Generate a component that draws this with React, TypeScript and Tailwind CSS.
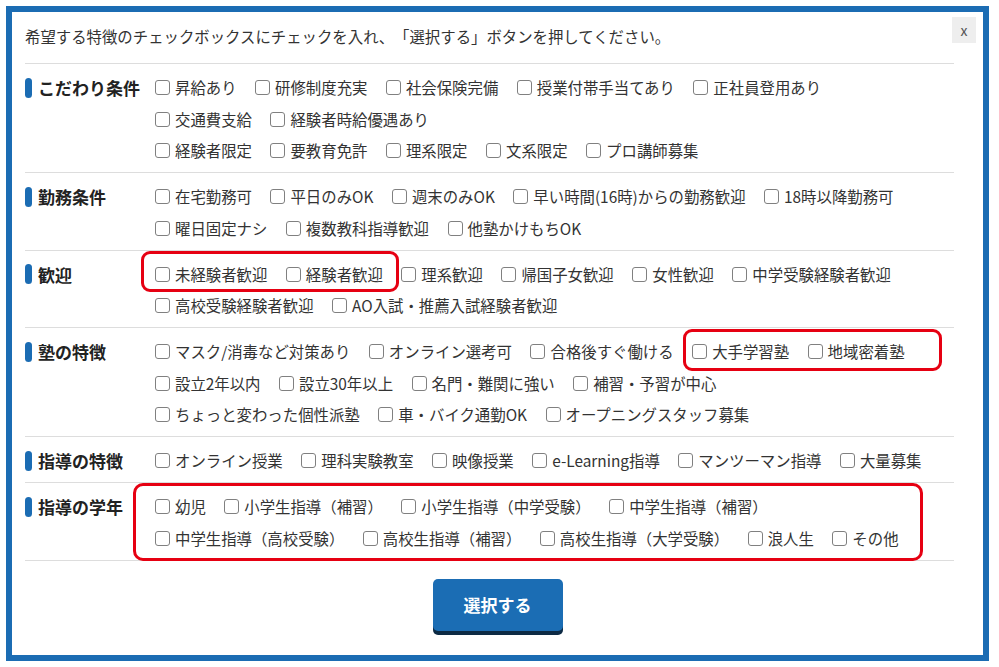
import React from 'react';

type Section = { label: string; rows: string[][] };

const SECTIONS: Section[] = [
  {
    label: 'こだわり条件',
    rows: [
      ['昇給あり', '研修制度充実', '社会保険完備', '授業付帯手当てあり', '正社員登用あり'],
      ['交通費支給', '経験者時給優遇あり'],
      ['経験者限定', '要教育免許', '理系限定', '文系限定', 'プロ講師募集'],
    ],
  },
  {
    label: '勤務条件',
    rows: [
      ['在宅勤務可', '平日のみOK', '週末のみOK', '早い時間(16時)からの勤務歓迎', '18時以降勤務可'],
      ['曜日固定ナシ', '複数教科指導歓迎', '他塾かけもちOK'],
    ],
  },
  {
    label: '歓迎',
    rows: [
      ['未経験者歓迎', '経験者歓迎', '理系歓迎', '帰国子女歓迎', '女性歓迎', '中学受験経験者歓迎'],
      ['高校受験経験者歓迎', 'AO入試・推薦入試経験者歓迎'],
    ],
  },
  {
    label: '塾の特徴',
    rows: [
      ['マスク/消毒など対策あり', 'オンライン選考可', '合格後すぐ働ける', '大手学習塾', '地域密着塾'],
      ['設立2年以内', '設立30年以上', '名門・難関に強い', '補習・予習が中心'],
      ['ちょっと変わった個性派塾', '車・バイク通勤OK', 'オープニングスタッフ募集'],
    ],
  },
  {
    label: '指導の特徴',
    rows: [['オンライン授業', '理科実験教室', '映像授業', 'e-Learning指導', 'マンツーマン指導', '大量募集']],
  },
  {
    label: '指導の学年',
    rows: [
      ['幼児', '小学生指導（補習）', '小学生指導（中学受験）', '中学生指導（補習）'],
      ['中学生指導（高校受験）', '高校生指導（補習）', '高校生指導（大学受験）', '浪人生', 'その他'],
    ],
  },
];

const CheckItem: React.FC<{ text: string }> = ({ text }) => (
  <label className="flex items-center mr-[18.5px] whitespace-nowrap cursor-pointer">
    <span className="w-[15px] h-[15px] border border-[#808080] rounded-[3px] bg-white mr-[5px] shrink-0" />
    <span>{text}</span>
  </label>
);

export default function App() {
  return (
    <div
      className="relative min-h-screen bg-white p-[6px] text-[#333] [text-spacing-trim:space-all]"
      style={{ fontFamily: '"Noto Sans CJK JP", "Noto Sans", sans-serif' }}
    >
      <div className="relative w-[983px] h-[655px] border-[6px] border-[#1b6cb3] bg-white pl-[13px] pr-[29px]">
        {/* close */}
        <button className="absolute top-[5px] right-[7px] w-[24px] h-[26px] bg-[#eeeeee] text-[#555] text-[14px] leading-none flex items-center justify-center">
          x
        </button>

        <div className="pt-[12px] pb-[15px] border-b border-[#dddddd] text-[15.4px] leading-[24px]">
          希望する特徴のチェックボックスにチェックを入れ、「選択する」ボタンを押してください。
        </div>

        {SECTIONS.map((sec) => (
          <div key={sec.label} className="flex pt-[8px] pb-[5.5px] border-b border-[#dddddd]">
            <div className="w-[130px] shrink-0 h-[31.5px] flex items-center">
              <span className="w-[7px] h-[20px] rounded-full bg-[#1b6cb3] mr-[6px]" />
              <span className="text-[17px] font-bold text-[#222]">{sec.label}</span>
            </div>
            <div className="flex flex-col text-[15.4px]">
              {sec.rows.map((row, i) => (
                <div key={i} className="flex h-[31.5px] items-center">
                  {row.map((t) => (
                    <CheckItem key={t} text={t} />
                  ))}
                </div>
              ))}
            </div>
          </div>
        ))}

        <div className="flex justify-center mt-[18px] pl-[16px]">
          <button className="w-[130px] h-[52px] rounded-[5px] bg-[#1b6db4] text-white text-[17px] font-bold shadow-[0_4px_0_#0d2a44]">
            選択する
          </button>
        </div>
      </div>

      {/* red highlight annotations */}
      <div className="absolute left-[141px] top-[251px] w-[258px] h-[41px] border-[3px] border-[#e60012] rounded-[9px] pointer-events-none" />
      <div className="absolute left-[683px] top-[329px] w-[259px] h-[42px] border-[3px] border-[#e60012] rounded-[9px] pointer-events-none" />
      <div className="absolute left-[133px] top-[483px] w-[790px] h-[78px] border-[3px] border-[#e60012] rounded-[10px] pointer-events-none" />
    </div>
  );
}
